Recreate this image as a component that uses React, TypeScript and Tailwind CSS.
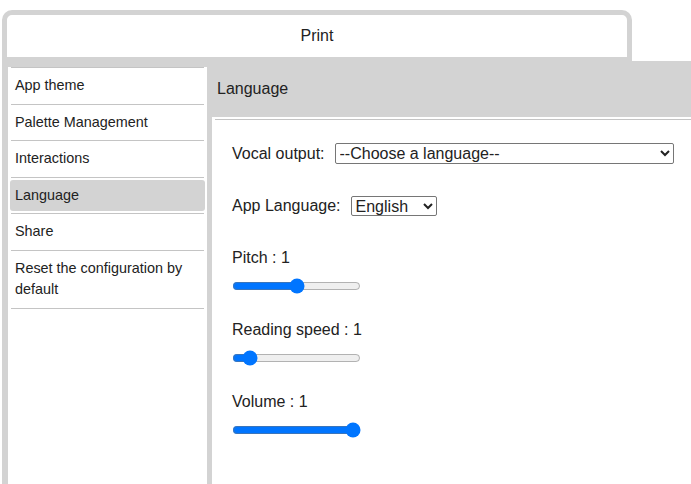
import React from "react";

const items = [
  "App theme",
  "Palette Management",
  "Interactions",
  "Language",
  "Share",
  "Reset the configuration by default",
];

export default function App() {
  return (
    <div className="w-[691px] h-[484px] overflow-hidden bg-white text-[#222] font-['Liberation_Sans',Arial,sans-serif]">
      <div className="ml-[2px] mt-[10px] w-[630px] h-[51px] border-[5px] border-b-[4px] border-[#d3d3d3] rounded-t-[10px] bg-white flex items-center justify-center text-[16px]">
        Print
      </div>
      <div className="ml-[2px] flex bg-[#d3d3d3] h-[423px] pl-[6px] gap-[5px]">
        <div className="mt-[6px] w-[199px] bg-white text-[14.4px]">
          <div className="mx-[3px] border-t border-[#c4c4c4]">
            {items.map((it) =>
              it === "Language" ? (
                <div key={it} className="border-b border-[#c4c4c4] py-[2px]">
                  <div className="-mx-[1px] rounded-[3px] bg-[#d3d3d3] px-[5px] py-[5px] leading-[21.5px]">
                    {it}
                  </div>
                </div>
              ) : (
                <div key={it} className="border-b border-[#c4c4c4] px-[4px] py-[7px] leading-[21.5px]">
                  {it}
                </div>
              )
            )}
          </div>
        </div>
        <div className="flex-1 flex flex-col">
          <div className="h-[56px] flex items-center pl-[5px] text-[16px]">Language</div>
          <div className="flex-1 bg-white pt-[2px] pl-[3px]">
            <div className="border-t border-[#c4c4c4] pl-[17px] text-[16px]">
              <div className="mt-[23px] flex items-center gap-[10px] h-[21px]">
                <span>Vocal output:</span>
                <select className="w-[339px] h-[21px] border border-[#767676] rounded-[2px] bg-white text-[16px]">
                  <option>--Choose a language--</option>
                </select>
              </div>
              <div className="mt-[32px] flex items-center gap-[10px] h-[20px]">
                <span>App Language:</span>
                <select className="w-[86px] h-[20px] border border-[#767676] rounded-[2px] bg-white text-[16px]">
                  <option>English</option>
                </select>
              </div>
              <div className="mt-[33px] leading-[18px]">Pitch : 1</div>
              <input type="range" min={0} max={2} step={0.1} defaultValue={1} className="block mt-[11px] w-[129px] h-[16px]" />
              <div className="mt-[27px] leading-[18px]">Reading speed : 1</div>
              <input type="range" min={0.1} max={10} step={0.1} defaultValue={1} className="block mt-[11px] w-[129px] h-[16px]" />
              <div className="mt-[27px] leading-[18px]">Volume : 1</div>
              <input type="range" min={0} max={1} step={0.1} defaultValue={1} className="block mt-[11px] w-[129px] h-[16px]" />
            </div>
          </div>
        </div>
      </div>
    </div>
  );
}
